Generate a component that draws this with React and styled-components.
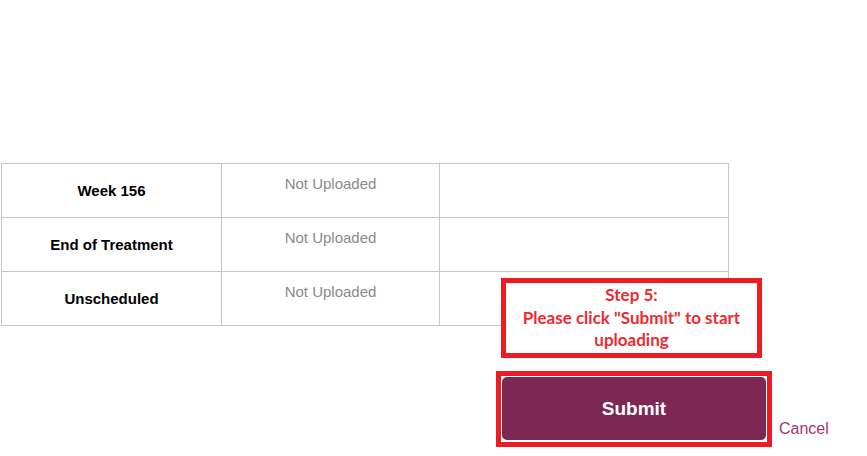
import React from 'react';
import styled, { createGlobalStyle } from 'styled-components';

const GlobalStyle = createGlobalStyle`
  html, body {
    margin: 0;
    padding: 0;
    background: #ffffff;
    font-family: "Liberation Sans", Arial, sans-serif;
  }
`;

const Page = styled.div`
  position: relative;
  width: 867px;
  height: 456px;
  padding: 163px 0 0 1px;
  box-sizing: border-box;
  overflow: hidden;
`;

const Table = styled.table`
  border-collapse: collapse;
  width: 727px;
  table-layout: fixed;
`;

const Cell = styled.td`
  border: 1px solid #c3c5d0;
  height: 54px;
  padding: 0;
  box-sizing: border-box;
  text-align: center;
  vertical-align: ${(p) => (p.$top ? 'top' : 'middle')};
  font-size: 15px;
  font-weight: ${(p) => (p.$bold ? 700 : 400)};
  color: ${(p) => (p.$muted ? '#8a8a8a' : '#000000')};
  padding-top: ${(p) => (p.$top ? '11px' : '0')};
`;

const Callout = styled.div`
  position: absolute;
  left: 501px;
  top: 278px;
  width: 261px;
  height: 80px;
  box-sizing: border-box;
  border: 5px solid #ed1c24;
  background: #ffffff;
  display: flex;
  flex-direction: column;
  align-items: center;
  justify-content: center;
  font-family: Lato, "Open Sans", sans-serif;
  font-weight: 700;
  font-size: 17px;
  line-height: 22.5px;
  color: #ee2a2f;
  text-align: center;
`;

const Actions = styled.div`
  display: flex;
  align-items: flex-end;
  margin-top: 45px;
  padding-left: 495px;
`;

const Frame = styled.div`
  border: 5px solid #ed1c24;
  padding: 1px 1px 2px 1px;
  width: 276px;
  height: 76px;
  box-sizing: border-box;
`;

const SubmitButton = styled.button`
  display: block;
  width: 100%;
  height: 100%;
  border: none;
  border-radius: 5px;
  background: #7d2852;
  color: #ffffff;
  font-family: "Liberation Sans", Arial, sans-serif;
  font-weight: 700;
  font-size: 19px;
  cursor: pointer;
`;

const CancelLink = styled.a`
  margin: 0 0 9px 7px;
  font-size: 16px;
  color: #a3366f;
  text-decoration: none;
  cursor: pointer;
`;

const rows = ['Week 156', 'End of Treatment', 'Unscheduled'];

export default function App() {
  return (
    <Page>
      <GlobalStyle />
      <Table>
        <colgroup>
          <col style={{ width: 220 }} />
          <col style={{ width: 218 }} />
          <col style={{ width: 289 }} />
        </colgroup>
        <tbody>
          {rows.map((name) => (
            <tr key={name}>
              <Cell $bold>{name}</Cell>
              <Cell $top $muted>Not Uploaded</Cell>
              <Cell />
            </tr>
          ))}
        </tbody>
      </Table>

      <Callout>
        <div>Step 5:</div>
        <div>Please click "Submit" to start</div>
        <div>uploading</div>
      </Callout>

      <Actions>
        <Frame>
          <SubmitButton>Submit</SubmitButton>
        </Frame>
        <CancelLink>Cancel</CancelLink>
      </Actions>
    </Page>
  );
}
